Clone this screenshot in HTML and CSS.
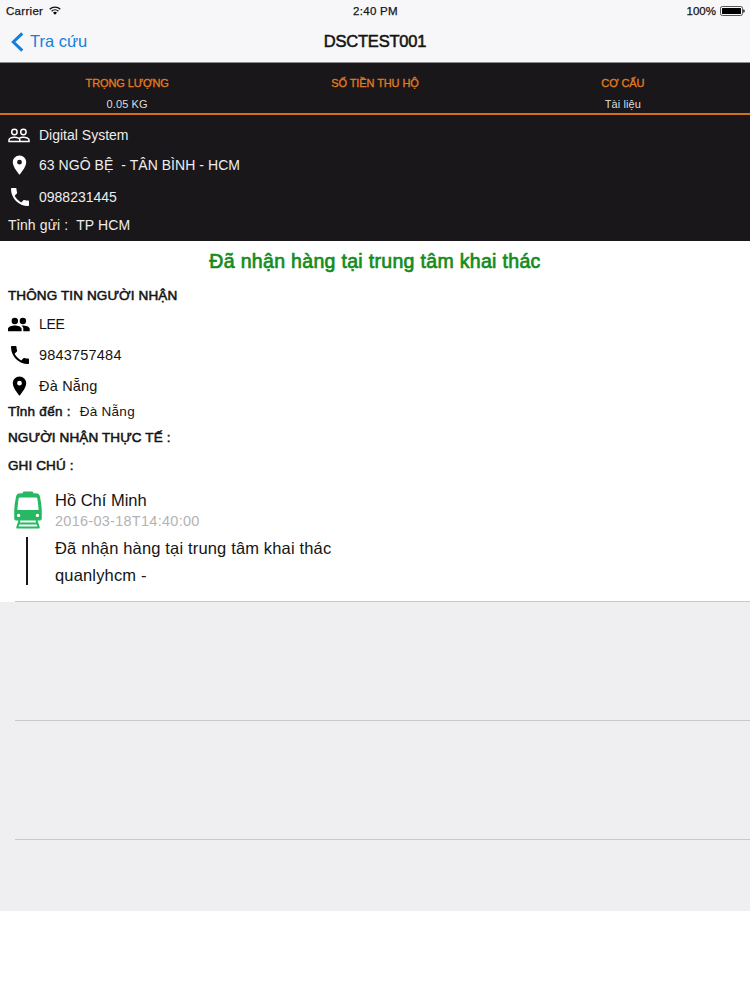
FILE: index.html
```html
<!DOCTYPE html>
<html lang="vi">
<head>
<meta charset="utf-8">
<title>DSCTEST001</title>
<link rel="stylesheet" href="styles.css">
</head>
<body>
<svg class="defs" aria-hidden="true">
  <symbol id="pin" viewBox="0 0 24 24"><path d="M12 2C8.130 2 5 5.130 5 9c0 5.250 7 13 7 13s7-7.750 7-13c0-3.870-3.130-7-7-7zm0 9.500a2.500 2.500 0 0 1 0-5 2.500 2.500 0 0 1 0 5z"/></symbol>
  <symbol id="phone" viewBox="3 3 18 18"><path d="M6.620 10.790c1.440 2.830 3.760 5.140 6.590 6.590l2.200-2.200c.27-.27.67-.36 1.020-.24 1.120.37 2.330.57 3.570.57.55 0 1 .45 1 1V20c0 .55-.45 1-1 1-9.390 0-17-7.610-17-17 0-.55.45-1 1-1h3.500c.55 0 1 .45 1 1 0 1.250.2 2.450.57 3.570.11.35.03.74-.25 1.020l-2.200 2.200z"/></symbol>
</svg>
<header class="bar">
  <div class="status">
    <div class="carrier"><span>Carrier</span>
      <svg class="wifi" viewBox="0 0 12 9"><path d="M.7 3.300a7.600 7.600 0 0 1 10.600 0M2.600 5.200a4.900 4.900 0 0 1 6.800 0" fill="none" stroke="#111" stroke-width="1.300"/><path d="M4 6.700a2.900 2.900 0 0 1 4 0L6 8.800z"/></svg>
    </div>
    <div class="time">2:40 PM</div>
    <div class="power"><span>100%</span>
      <svg class="battery" viewBox="0 0 25 10"><rect x=".5" y=".5" width="22" height="9" rx="1.800" fill="none" stroke="#555"/><rect x="2" y="2" width="19" height="6" rx=".6"/><path d="M23.300 3.200q1.400.3 1.400 1.800t-1.400 1.800z"/></svg>
    </div>
  </div>
  <nav class="nav">
    <a class="back"><svg class="chevron" viewBox="0 0 13 20"><path d="M11.300 1.300L2.300 10l9 8.700" fill="none" stroke="#147fdc" stroke-width="3"/></svg><span>Tra cứu</span></a>
    <h1 class="title">DSCTEST001</h1>
    <span></span>
  </nav>
</header>
<section class="summary">
  <div><div class="label">TRỌNG LƯỢNG</div><div class="value">0.05 KG</div></div>
  <div><div class="label">SỐ TIỀN THU HỘ</div></div>
  <div><div class="label">CƠ CẤU</div><div class="value">Tài liệu</div></div>
</section>
<section class="sender">
  <div class="row r-name"><svg class="people" viewBox="0 0 22 15" fill="none" stroke="#fff" stroke-width="1.500"><circle cx="6.400" cy="4" r="2.700"/><circle cx="15.400" cy="4" r="2.700"/><path d="M1 13.600v-1.800c0-1.500 3-2.600 5.400-2.600s5.400 1.100 5.400 2.600v1.800zM11.800 13.600H21v-1.800c0-1.500-3-2.600-5.600-2.600-1.500 0-3 .3-4.200 1"/></svg><span>Digital System</span></div>
  <div class="row r-address"><svg class="pin"><use href="#pin"/></svg><span class="t-address">63 NGÔ BỆ&nbsp; - TÂN BÌNH - HCM</span></div>
  <div class="row r-phone"><svg class="phone"><use href="#phone"/></svg><span>0988231445</span></div>
  <div class="row r-from"><span class="t-from">Tỉnh gửi :&nbsp; TP HCM</span></div>
</section>
<main class="detail">
  <h2 class="state">Đã nhận hàng tại trung tâm khai thác</h2>
  <h3 class="heading h-receiver">THÔNG TIN NGƯỜI NHẬN</h3>
  <div class="row d-name"><svg class="people" viewBox="0 0 22 15"><circle cx="6.800" cy="4" r="3.200"/><circle cx="14.900" cy="4" r="3.200"/><path d="M0 14.300v-2.500c0-2.200 4.200-3.400 6.800-3.400s6.800 1.200 6.800 3.400v2.500zM15.300 14.300v-2.500c0-1.400-.7-2.500-1.800-3.300 3-.3 8.200.8 8.200 3.300v2.500z"/></svg><span class="t-lee">LEE</span></div>
  <div class="row d-phone"><svg class="phone"><use href="#phone"/></svg><span>9843757484</span></div>
  <div class="row d-address"><svg class="pin"><use href="#pin"/></svg><span>Đà Nẵng</span></div>
  <div class="row d-to"><b class="strong">Tỉnh đến :</b><span>Đà Nẵng</span></div>
  <h3 class="heading h-actual">NGƯỜI NHẬN THỰC TẾ :</h3>
  <h3 class="heading h-note">GHI CHÚ :</h3>
</main>
<section class="history">
  <article class="event">
    <div class="track">
      <svg class="train" viewBox="0 0 28 38"><path fill="#27b864" fill-rule="evenodd" d="M10 .4h8q1.300 0 1.300 1.200v.7h2.200q3.900 0 4.500 3.400Q27.800 14 27.800 21v6q0 2.600-2.600 2.600H2.800Q.2 29.600.2 27v-6Q.2 14 2 5.700q.6-3.400 4.500-3.400h2.200v-.7Q8.700.4 10 .4zM6.200 6.500q-1.400 0-1.600 1.300L3.400 17.600q-.2 1.500 1.300 1.500h18.600q1.500 0 1.300-1.500L23.400 7.800q-.2-1.300-1.600-1.300zM4.600 22.700a1.700 1.700 0 1 0 0 3.400 1.700 1.700 0 0 0 0-3.400zM23.400 22.700a1.700 1.700 0 1 0 0 3.400 1.700 1.700 0 0 0 0-3.400z"/><path d="M5.600 29l-2.400 7.600h21.600L22.400 29M5 32.600h18" fill="none" stroke="#27b864" stroke-width="2" stroke-linejoin="round"/></svg>
      <div class="line"></div>
    </div>
    <div class="info">
      <div class="place">Hồ Chí Minh</div>
      <div class="date">2016-03-18T14:40:00</div>
      <div class="message">Đã nhận hàng tại trung tâm khai thác</div>
      <div class="user">quanlyhcm -</div>
    </div>
  </article>
  <div class="empty"></div>
  <div class="empty"></div>
  <div class="empty last"></div>
</section>
</body>
</html>
```
FILE: styles.css
```css
* { box-sizing: border-box; }
body { margin: 0; background: #fff; color: #141414; font: 14px "Liberation Sans", Arial, sans-serif; white-space: nowrap; }
svg { display: block; flex: none; }
h1, h2, h3 { margin: 0; font-weight: 400; }
.defs { position: absolute; width: 0; height: 0; }
.bar { height: 63px; background: #f7f6f9; border-bottom: 1px solid #8b8b8d; }
.status { height: 21px; padding: 0 5px 0 6px; display: grid; grid-template-columns: 1fr auto 1fr; align-items: center; font-size: 11.5px; -webkit-text-stroke: .25px; }
.carrier, .power { display: flex; align-items: center; gap: 6px; }
.carrier, .time { letter-spacing: .3px; }
.power { justify-content: flex-end; gap: 4px; }
.wifi { width: 12px; height: 9px; }
.battery { width: 25px; height: 10px; }
.nav { height: 41px; padding: 0 11px; display: grid; grid-template-columns: 1fr auto 1fr; align-items: center; }
.back { display: flex; align-items: center; gap: 6px; color: #147fdc; font-size: 16.5px; }
.chevron { width: 13px; height: 20px; }
.title { font-size: 16.5px; letter-spacing: -.2px; -webkit-text-stroke: .55px; }
.summary { height: 52px; background: #19171a; border-bottom: 2px solid #cf711d; display: grid; grid-template-columns: 33.9% 32.2% 33.9%; text-align: center; padding-top: 11px; }
.label { height: 18px; line-height: 18px; color: #e37d22; font-size: 11px; letter-spacing: -.1px; -webkit-text-stroke: .3px; }
.value { height: 24px; line-height: 24px; color: #ddd; font-size: 11px; letter-spacing: .1px; }
.sender { height: 126px; padding: 4px 8px 0; background: #19171a; color: #eee; }
.row { display: flex; align-items: center; }
.people { width: 22px; height: 15px; margin-right: 9px; }
.pin { width: 23px; height: 24px; margin-right: 8px; }
.phone { width: 18px; height: 18px; margin: 0 10px 0 3px; }
.sender .pin, .sender .phone { fill: #fff; }
.r-name { height: 32px; }
.r-address { height: 28px; }
.t-address { letter-spacing: .05px; }
.r-phone { height: 35px; }
.r-from { height: 22px; }
.t-from { letter-spacing: .12px; }
.detail { height: 240px; padding: 0 8px; }
.state { height: 40px; line-height: 40px; text-align: center; color: #158c1b; font-size: 19.5px; letter-spacing: .32px; -webkit-text-stroke: .7px; }
.heading { font-size: 13.5px; letter-spacing: .12px; -webkit-text-stroke: .55px; }
.h-receiver { height: 30px; line-height: 30px; }
.d-name { height: 26px; }
.t-lee { letter-spacing: -.3px; }
.d-phone { height: 35px; }
.d-phone, .d-address { font-size: 14.5px; letter-spacing: .2px; }
.d-address { height: 28px; }
.d-to { height: 22px; gap: 9px; font-size: 13.5px; letter-spacing: .27px; }
.strong { font-weight: 400; -webkit-text-stroke: .5px; }
.h-actual { height: 31px; line-height: 31px; }
.h-note { height: 26px; line-height: 26px; }
.history { height: 430px; background: #efeef1; }
.event { height: 121px; padding: 10px 0 0 14px; display: flex; gap: 13px; background: linear-gradient(#c9c8cc, #c9c8cc) 15px 100% / 100% 1px no-repeat #fff; font-size: 16.5px; letter-spacing: .16px; }
.track { width: 28px; }
.train { width: 28px; height: 38px; }
.line { width: 2px; height: 48px; margin: 8px 0 0 12px; background: #19171a; }
.place { height: 19px; line-height: 19px; letter-spacing: 0; }
.date { height: 23px; line-height: 23px; font-size: 14.5px; letter-spacing: .27px; color: #b3b3b3; }
.message { height: 31px; line-height: 31px; }
.user { height: 22px; line-height: 22px; }
.empty { height: 119px; margin-left: 15px; border-bottom: 1px solid #c9c8cc; }
.last { height: 71px; border: 0; }
```
